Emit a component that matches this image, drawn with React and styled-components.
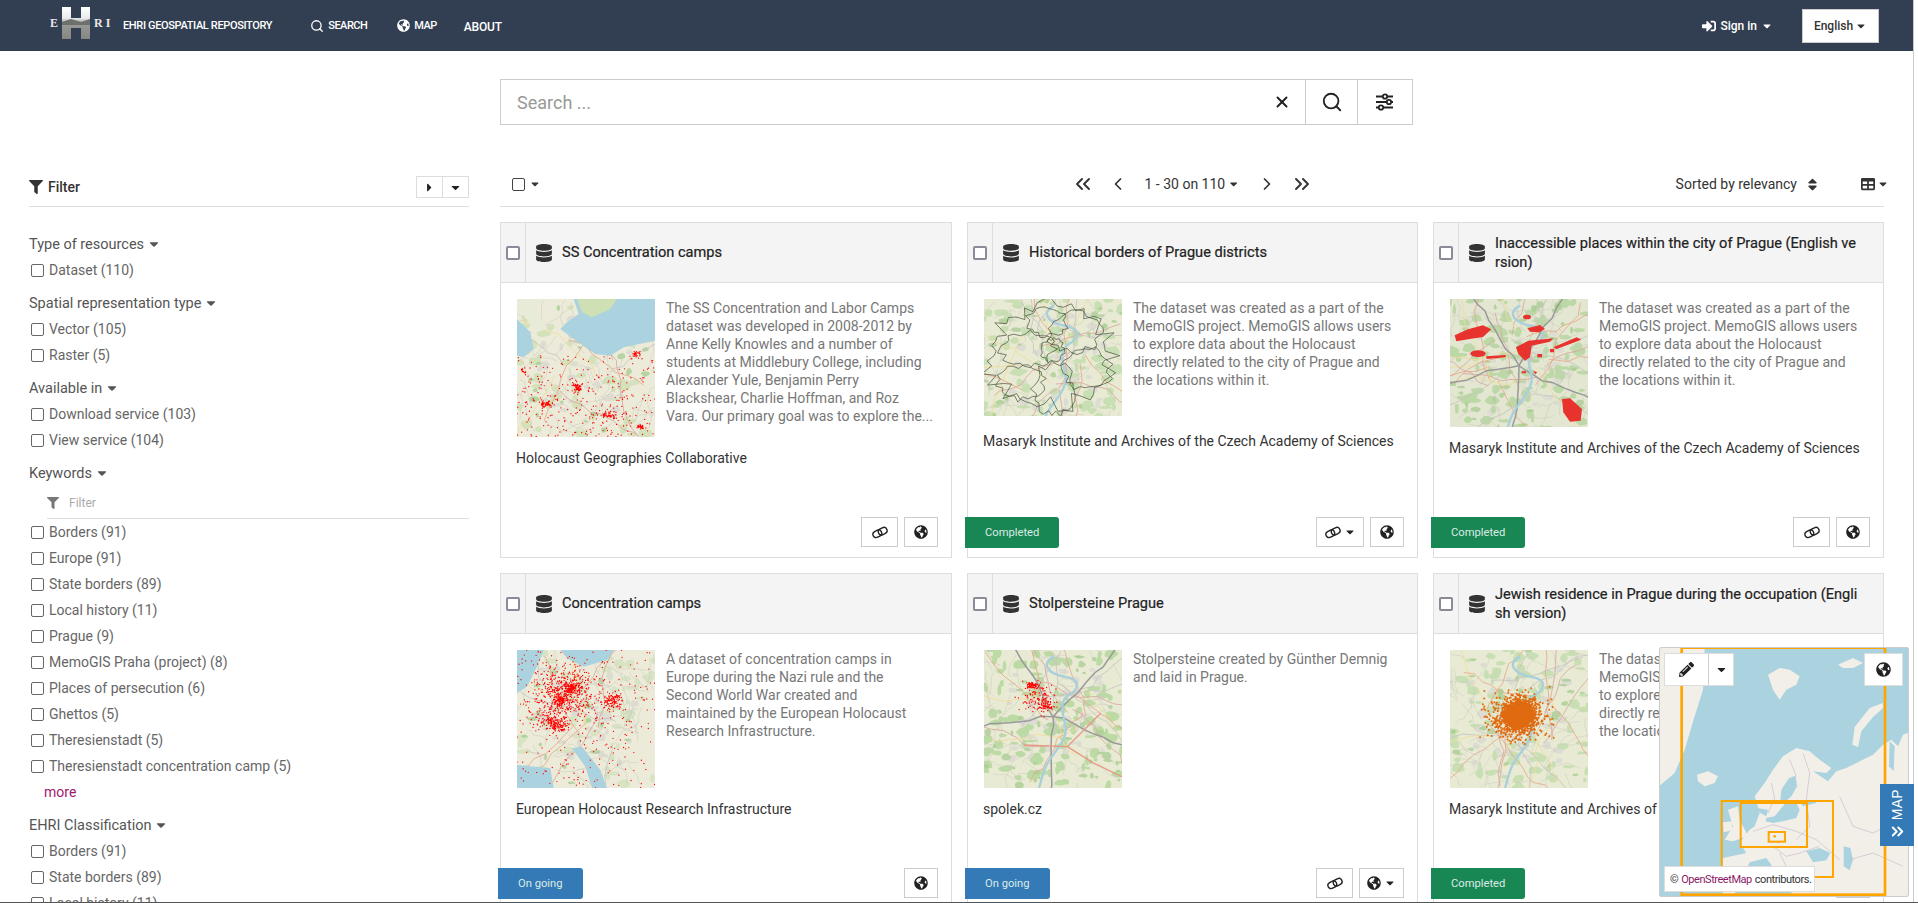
import React from 'react';
import styled, { createGlobalStyle } from 'styled-components';
import { FaCaretDown, FaCaretRight, FaDatabase, FaFilter, FaGlobeAmericas, FaPencilAlt, FaSignInAlt, FaSort, FaTable } from 'react-icons/fa';
import { ChevronLeft, ChevronRight, ChevronsLeft, ChevronsRight, Search, X } from 'lucide-react';

const GlobalStyle = createGlobalStyle`
  html, body {
    margin: 0;
    padding: 0;
    background: #fff;
    font-family: Roboto, "Liberation Sans", sans-serif;
    font-size: 14px;
    color: #333;
  }
`;

const Shell = styled.div`
  position: relative;
  width: 1918px;
  height: 903px;
  overflow: hidden;
  display: flex;
  flex-direction: column;
`;

const Viewport = styled.div`
  flex: 1;
  min-height: 0;
  display: flex;
`;

const BottomEdge = styled.div`
  height: 1px;
  background: #555;
`;

const ScrollRail = styled.div`
  width: 4px;
  border-left: 1px solid #ccc;
  background: #fff;
`;

const Page = styled.div`
  flex: 1;
  min-width: 0;
  overflow: hidden;
`;

const Navbar = styled.nav`
  height: 51px;
  background: #323f52;
  display: flex;
  align-items: center;
  padding: 0 34px 0 50px;
  color: #fff;
`;

const Logo = styled.div`
  display: flex;
  align-items: center;
  font-family: "Liberation Serif", serif;
  font-size: 12px;
  font-weight: 700;
  color: #e8e8e8;
  letter-spacing: 3px;
  width: 73px;
  margin-top: -5px;
`;

const LogoMark = styled.svg`
  width: 28px;
  height: 32px;
  margin: 0 4px 0 1px;
  flex-shrink: 0;
`;

const Brand = styled.span`
  font-size: 11px;
  font-weight: 500;
  letter-spacing: -0.35px;
  white-space: nowrap;
  margin-right: 38px;
`;

const NavLink = styled.span`
  display: inline-flex;
  align-items: center;
  gap: 4px;
  font-size: ${(p) => (p.$big ? 12 : 11)}px;
  font-weight: 500;
  letter-spacing: ${(p) => (p.$big ? -0.2 : -0.5)}px;
  margin-top: ${(p) => (p.$big ? 2 : 0)}px;
  margin-right: ${(p) => p.$gap || 30}px;
  white-space: nowrap;
  svg { flex-shrink: 0; }
`;

const NavRight = styled.div`
  margin-left: auto;
  display: flex;
  align-items: center;
`;

const SignIn = styled.span`
  display: inline-flex;
  align-items: center;
  gap: 4px;
  font-size: 12px;
  font-weight: 500;
  margin-right: 29px;
`;

const LangButton = styled.button`
  width: 77px;
  height: 34px;
  border: 1px solid #ccc;
  background: #fff;
  color: #333;
  font: 500 12px Roboto, sans-serif;
  padding: 0;
  display: inline-flex;
  align-items: center;
  justify-content: center;
  gap: 2px;
`;

const Layout = styled.div`
  display: grid;
  grid-template-columns: 440px 1384px;
  column-gap: 31px;
  padding-left: 29px;
`;

const SearchBar = styled.div`
  grid-column: 2;
  width: 913px;
  height: 46px;
  margin: 28px 0 51px;
  box-sizing: border-box;
  border: 1px solid #ccc;
  display: flex;
  align-items: center;
`;

const SearchInput = styled.input`
  flex: 1;
  min-width: 0;
  border: 0;
  outline: 0;
  height: 100%;
  padding: 0 0 0 16px;
  font: 400 18px Roboto, sans-serif;
  color: #333;
  &::placeholder { color: #999; opacity: 1; }
`;

const ClearButton = styled.span`
  width: 46px;
  display: flex;
  align-items: center;
  justify-content: center;
  color: #222;
`;

const SearchAction = styled.span`
  width: ${(p) => p.$w}px;
  height: 100%;
  box-sizing: border-box;
  border-left: 1px solid #ccc;
  display: flex;
  align-items: center;
  justify-content: center;
  color: #222;
`;

const Sidebar = styled.aside`
  grid-column: 1;
  grid-row: 2;
  min-width: 0;
`;

const FilterHead = styled.div`
  height: 31px;
  box-sizing: border-box;
  padding-bottom: 8px;
  border-bottom: 1px solid #ddd;
  display: flex;
  align-items: center;
  justify-content: space-between;
  margin-bottom: 24px;
`;

const FilterTitle = styled.div`
  display: flex;
  align-items: center;
  gap: 5px;
  font-size: 14px;
  font-weight: 500;
  color: #333;
`;

const ExpandGroup = styled.div`
  display: flex;
  border: 1px solid #ddd;
  height: 22px;
  box-sizing: border-box;
`;

const ExpandCell = styled.span`
  width: 25px;
  display: flex;
  align-items: center;
  justify-content: center;
  color: #222;
  & + & { border-left: 1px solid #ddd; }
`;

const FacetGroup = styled.section`
  margin-bottom: 7px;
`;

const FacetTitle = styled.div`
  height: 26px;
  display: flex;
  align-items: center;
  gap: 3px;
  font-size: 14.5px;
  color: #555;
`;

const FacetRow = styled.div`
  height: 26px;
  display: flex;
  align-items: center;
  gap: 5px;
  padding-left: 2px;
  font-size: 14px;
  color: #666;
  white-space: nowrap;
`;

const FacetBox = styled.span`
  width: 13px;
  height: 13px;
  box-sizing: border-box;
  border: 1.5px solid #666;
  border-radius: 2px;
  flex-shrink: 0;
  margin-top: 1px;
`;

const FacetFilter = styled.div`
  margin-left: 18px;
  height: 31px;
  box-sizing: border-box;
  margin-top: 2px;
  border-bottom: 1px solid #ddd;
  display: flex;
  align-items: center;
  gap: 10px;
  font-size: 12px;
  color: #aaa;
  svg { color: #777; }
`;

const MoreLink = styled.div`
  height: 26px;
  line-height: 26px;
  padding-left: 15px;
  color: #a2186b;
`;

const Content = styled.main`
  grid-column: 2;
  grid-row: 2;
  min-width: 0;
`;

const Toolbar = styled.div`
  height: 31px;
  box-sizing: border-box;
  padding-bottom: 14px;
  border-bottom: 1px solid #ddd;
  display: grid;
  grid-template-columns: 1fr auto 1fr;
  align-items: center;
  margin-bottom: 15px;
`;

const SelectAll = styled.div`
  display: flex;
  align-items: center;
  gap: 4px;
  padding-left: 12px;
`;

const SelectBox = styled.span`
  width: 13px;
  height: 13px;
  box-sizing: border-box;
  border: 1.5px solid #444;
  border-radius: 2px;
`;

const Pager = styled.div`
  display: flex;
  align-items: center;
  gap: 19px;
  color: #333;
`;

const PagerArrow = styled.span`
  width: 16px;
  height: 16px;
  display: flex;
  align-items: center;
  justify-content: center;
  svg { flex-shrink: 0; }
`;

const PagerLabel = styled.span`
  display: inline-flex;
  align-items: center;
  gap: 3px;
  width: 95px;
  white-space: nowrap;
`;

const ToolbarRight = styled.div`
  display: flex;
  align-items: center;
  justify-content: flex-end;
  margin-right: -5px;
  color: #333;
`;

const SortLabel = styled.span`
  display: inline-flex;
  align-items: center;
  gap: 8px;
  margin-right: 41px;
`;

const ViewToggle = styled.span`
  display: inline-flex;
  align-items: center;
  gap: 2px;
`;

const CardGrid = styled.div`
  display: grid;
  grid-template-columns: 452px 451px 451px;
  gap: 15px;
`;

const Card = styled.article`
  position: relative;
  height: 336px;
  box-sizing: border-box;
  border: 1px solid #ddd;
  display: flex;
  flex-direction: column;
`;

const CardHeader = styled.header`
  height: 59px;
  flex-shrink: 0;
  box-sizing: content-box;
  border-bottom: 1px solid #ddd;
  background: #f4f4f4;
  display: flex;
  align-items: center;
`;

const CheckCell = styled.div`
  width: 24px;
  height: 100%;
  border-right: 1px solid #ddd;
  display: flex;
  align-items: center;
  justify-content: center;
  flex-shrink: 0;
`;

const CardBox = styled.span`
  width: 14px;
  height: 14px;
  box-sizing: border-box;
  border: 2px solid #8a8a98;
  border-radius: 2px;
  background: #fff;
`;

const TypeIcon = styled.span`
  width: 16px;
  margin: 0 10px 0 10px;
  display: flex;
  color: #333;
  flex-shrink: 0;
`;

const CardTitle = styled.h3`
  margin: 0;
  width: 365px;
  font-size: 14.6px;
  line-height: 19px;
  font-weight: 400;
  color: #222;
  -webkit-text-stroke: 0.2px #222;
  word-break: break-all;
`;

const CardBody = styled.div`
  padding: 16px 16px 0;
  flex: 1;
  min-height: 0;
`;

const Preview = styled.div`
  display: flex;
  align-items: flex-start;
  gap: 11px;
`;

const Thumb = styled.svg`
  width: 138px;
  flex-shrink: 0;
  display: block;
`;

const Description = styled.p`
  margin: 0;
  font-size: 14px;
  line-height: 18px;
  color: #777;
  width: 263.5px;
`;

const TruncatedLine = styled.span`
  white-space: nowrap;
`;

const Publisher = styled.div`
  margin: ${(p) => p.$top || 12}px 0 0 -1px;
  line-height: 18px;
  font-size: 14px;
  color: #333;
  white-space: nowrap;
`;

const CardFooter = styled.footer`
  display: flex;
  justify-content: flex-end;
  gap: 6px;
  padding: 0 13px 10px;
`;

const IconButton = styled.span`
  width: ${(p) => p.$w || 34}px;
  height: 30px;
  box-sizing: border-box;
  border: 1px solid #ccc;
  background: #fff;
  display: inline-flex;
  align-items: center;
  justify-content: center;
  gap: 3px;
  color: #222;
`;

const StatusBadge = styled.span`
  position: absolute;
  left: -3px;
  bottom: 9px;
  height: 31px;
  padding: 0 20px;
  display: flex;
  align-items: center;
  font-size: 11.2px;
  color: #dcebe4;
  border-radius: 0 3px 3px 0;
  background: ${(p) => (p.$status === 'Completed' ? '#198754' : '#337ab7')};
`;

const MiniMap = styled.div`
  position: absolute;
  right: 9px;
  bottom: 6px;
  width: 250px;
  height: 250px;
  box-sizing: border-box;
`;

const MiniMapCanvas = styled.svg`
  display: block;
  width: 250px;
  height: 250px;
  border-radius: 3px;
  outline: 1px solid #ccc;
  outline-offset: -1px;
`;

const MapControl = styled.div`
  position: absolute;
  top: 6px;
  ${(p) => (p.$right ? 'right: 6px;' : 'left: 5px;')}
  height: 33px;
  display: flex;
  background: #fff;
  box-sizing: border-box;
  border: 1px solid #ddd;
`;

const MapControlCell = styled.span`
  width: ${(p) => p.$w}px;
  display: flex;
  align-items: center;
  justify-content: center;
  color: #222;
  & + & { border-left: 1px solid #ccc; }
`;

const Attribution = styled.div`
  position: absolute;
  left: 5px;
  bottom: 5px;
  width: 151px;
  height: 26px;
  box-sizing: border-box;
  background: #fff;
  border: 1px solid #ddd;
  display: flex;
  align-items: center;
  padding-left: 5px;
  font-size: 11px;
  letter-spacing: -0.45px;
  color: #333;
  white-space: nowrap;
  a { color: #8a1a66; text-decoration: none; margin: 0 3px; }
`;

const MapTab = styled.div`
  position: absolute;
  right: -5px;
  top: 137px;
  width: 34px;
  height: 62px;
  background: #337ab7;
  color: #fff;
  display: flex;
  flex-direction: column;
  align-items: center;
  justify-content: center;
  gap: 1px;
`;

const MapTabLabel = styled.span`
  writing-mode: vertical-rl;
  transform: rotate(180deg);
  font-family: "Liberation Sans", sans-serif;
  font-size: 14px;
  letter-spacing: 0.3px;
`;

// small seeded generator so the thumbnails look the same on each run
const makeRng = (seed) => {
  let a = seed;
  return () => {
    a = (a + 0x6d2b79f5) | 0;
    let t = Math.imul(a ^ (a >>> 15), 1 | a);
    t = (t + Math.imul(t ^ (t >>> 7), 61 | t)) ^ t;
    return ((t ^ (t >>> 14)) >>> 0) / 4294967296;
  };
};

const blob = (r, cx, cy, rx, ry, n = 10, jitter = 0.4) => {
  const pts = [];
  for (let i = 0; i < n; i++) {
    const ang = (i / n) * Math.PI * 2;
    const k = 1 - jitter / 2 + r() * jitter;
    pts.push(`${(cx + Math.cos(ang) * rx * k).toFixed(1)} ${(cy + Math.sin(ang) * ry * k).toFixed(1)}`);
  }
  return `M${pts.join('L')}Z`;
};

const wander = (r, x, y, steps, dx, dy, spread) => {
  let d = `M${x.toFixed(1)} ${y.toFixed(1)}`;
  let cx = x;
  let cy = y;
  for (let i = 0; i < steps; i++) {
    cx += dx + (r() - 0.5) * spread;
    cy += dy + (r() - 0.5) * spread;
    d += `L${cx.toFixed(1)} ${cy.toFixed(1)}`;
  }
  return d;
};

// clusters: [cx, cy, sx, sy, n, uniform?]
const scatter = (r, clusters) => {
  let d = '';
  clusters.forEach(([cx, cy, sx, sy, n, uniform]) => {
    for (let i = 0; i < n; i++) {
      const g1 = uniform ? r() * 2 - 1 : (r() + r() + r() - 1.5) / 1.5;
      const g2 = uniform ? r() * 2 - 1 : (r() + r() + r() - 1.5) / 1.5;
      d += `M${(cx + g1 * sx).toFixed(1)} ${(cy + g2 * sy).toFixed(1)}h.01`;
    }
  });
  return d;
};

const Terrain = ({ seed, bg = '#e8ead4', green = 90, greenColor = '#c8dfb4', roads = 16, heavy = 0 }) => {
  const r = makeRng(seed);
  const patches = [];
  for (let i = 0; i < green; i++) {
    patches.push(blob(r, r() * 414, r() * 414, 5 + r() * 17, 4 + r() * 12));
  }
  const forests = [];
  for (let i = 0; i < green / 3; i++) {
    forests.push(blob(r, r() * 414, r() * 414, 4 + r() * 11, 3 + r() * 8));
  }
  const grey = [];
  for (let i = 0; i < 40; i++) {
    grey.push(blob(r, 207 + (r() - 0.5) * 300, 190 + (r() - 0.5) * 300, 5 + r() * 12, 4 + r() * 10));
  }
  const minor = [];
  for (let i = 0; i < 70; i++) {
    const ang = r() * Math.PI * 2;
    minor.push(wander(r, r() * 414, r() * 414, 5, Math.cos(ang) * 16, Math.sin(ang) * 16, 18));
  }
  const lines = [];
  for (let i = 0; i < roads; i++) {
    const ang = r() * Math.PI * 2;
    lines.push({
      d: wander(r, 207 + (r() - 0.5) * 200, 190 + (r() - 0.5) * 200, 9, Math.cos(ang) * 30, Math.sin(ang) * 30, 26),
      c: ['#e8a98c', '#c7c5c0', '#f1dc9a', '#d9a9a0'][i % 4],
    });
  }
  const main = [];
  for (let i = 0; i < heavy; i++) {
    const ang = (i / heavy) * Math.PI * 2 + 0.4;
    main.push(wander(r, 207, 200, 9, Math.cos(ang) * 32, Math.sin(ang) * 32, 18));
  }
  return (
    <>
      <rect width="414" height="414" fill={bg} />
      <path d={grey.join('')} fill="#dcdcd2" />
      <path d={patches.join('')} fill={greenColor} />
      <path d={forests.join('')} fill="#a9cd92" opacity="0.8" />
      <path d={minor.join('')} fill="none" stroke="#c9c9bd" strokeWidth="1.4" />
      {lines.map((l, i) => (
        <path key={i} d={l.d} fill="none" stroke={l.c} strokeWidth="2.6" />
      ))}
      {main.map((d, i) => (
        <path key={i} d={d} fill="none" stroke="#9a9a9a" strokeWidth="4.5" />
      ))}
    </>
  );
};

const River = () => (
  <path d="M210 20C170 40 190 70 240 80C300 90 280 120 255 135C225 150 235 190 245 230C250 270 215 300 190 340C175 370 170 400 165 414" fill="none" stroke="#a9cfdc" strokeWidth="7" />
);

const Dots = ({ d, color = '#f00', size = 4 }) => (
  <path d={d} fill="none" stroke={color} strokeWidth={size} strokeLinecap="round" />
);

const districtLines = () => {
  const r = makeRng(44);
  const shapes = [blob(r, 200, 170, 185, 150, 60, 0.36)];
  [[130, 150, 80, 50], [270, 100, 80, 60], [110, 250, 70, 50], [210, 270, 60, 80], [310, 210, 70, 60], [205, 155, 35, 35], [190, 70, 60, 40]].forEach(([x, y, a, b]) => {
    shapes.push(blob(r, x, y, a, b, 30, 0.38));
  });
  return shapes.join('');
};

const camps1 = scatter(makeRng(7), [[207, 292, 207, 122, 300, true], [180, 265, 22, 20, 60], [90, 315, 32, 16, 50], [275, 350, 45, 18, 50], [360, 165, 18, 12, 26], [370, 385, 18, 10, 30], [20, 215, 16, 16, 14]]);
const camps2 = scatter(makeRng(12), [[207, 207, 207, 207, 300, true], [150, 130, 130, 110, 500], [165, 115, 30, 22, 120], [130, 150, 28, 20, 80], [290, 150, 50, 40, 120], [90, 210, 60, 40, 100], [125, 225, 40, 30, 110]]);
const stones = scatter(makeRng(21), [[160, 145, 75, 70, 120], [145, 105, 28, 14, 70], [190, 165, 42, 28, 60]]);
const residents = scatter(makeRng(33), [[200, 205, 135, 105, 450], [205, 195, 80, 70, 800]]);

const scenes = {
  germany: (
    <>
      <Terrain seed={3} green={60} bg="#ecebd9" greenColor="#d3e2bb" roads={10} />
      <path d="M170 0L185 45L150 70L130 90L170 120L205 145L235 165L280 170L320 145L414 125V0Z" fill="#aad3df" />
      <path d="M0 60L40 100L50 150L20 175L0 170Z" fill="#aad3df" />
      <path d="M180 0H300L280 30L225 55L195 40Z" fill="#cfe0b4" />
      <path d="M0 0H70L60 40L90 90L60 100L20 50L0 40Z" fill="#e9ebd9" />
      <Dots d={camps1} />
    </>
  ),
  districts: (
    <>
      <Terrain seed={14} green={110} roads={20} />
      <River />
      <path d={districtLines()} fill="none" stroke="#3d4a33" strokeWidth="2" />
    </>
  ),
  places: (
    <>
      <Terrain seed={27} green={110} roads={26} bg="#e3e6d0" greenColor="#bcd8a6" heavy={5} />
      <River />
      <g fill="#e8322d">
        <path d="M14 109L54 91L99 79L124 91L99 114L64 119L19 127Z" />
        <ellipse cx="84" cy="164" rx="23" ry="10" />
        <path d="M108 172L167 168L167 175L110 180Z" />
        <ellipse cx="231" cy="54" rx="12" ry="7" />
        <path d="M232 88L270 78L285 90L268 100L240 98Z" />
        <path d="M198 145L235 125L310 118L300 128L245 140L240 175L225 185L205 165Z" />
        <path d="M310 145L380 115L394 122L360 135L320 150Z" />
        <path d="M336 300L360 298L396 330L392 365L360 368L340 340Z" />
        <path d="M262 165H276V175H262ZM300 150H312V160H300ZM215 217H228V223H215ZM250 215L262 220L255 226Z" />
      </g>
    </>
  ),
  europe: (
    <>
      <Terrain seed={5} green={60} bg="#ecebd9" greenColor="#d7e3c2" roads={12} />
      <path d="M0 0H80L60 50L30 110L0 130Z" fill="#aad3df" />
      <path d="M130 0H290L270 30L200 50L150 25Z" fill="#aad3df" />
      <path d="M165 295L195 290L250 360L270 414H225L205 350Z" fill="#aad3df" />
      <path d="M0 345L55 350L100 355L110 414H0Z" fill="#aad3df" />
      <Dots d={camps2} />
    </>
  ),
  stones: (
    <>
      <Terrain seed={38} green={110} roads={18} greenColor="#bcdaa4" heavy={5} />
      <River />
      <path d="M120 285L250 290L300 240L350 190M250 290L330 340L414 380" fill="none" stroke="#e69a86" strokeWidth="4" />
      <Dots d={stones} />
    </>
  ),
  residents: (
    <>
      <Terrain seed={51} green={90} roads={22} />
      <River />
      <path d={blob(makeRng(2), 205, 195, 48, 40, 16, 0.4)} fill="#d9660f" />
      <Dots d={residents} color="#e06a10" size={6} />
    </>
  ),
};

const MiniMapDrawing = () => (
  <MiniMapCanvas viewBox="58 22 750 750">
    <rect x="58" y="22" width="750" height="750" fill="#aad3df" />
    <g fill="#f2efe9">
      <path d="M58 22H195L190 150L165 230L135 330L105 400L58 440Z" />
      <path d="M385 105L420 85L450 90L480 110L470 135L440 150L420 180L400 150Z" />
      <path d="M595 75L640 55L670 70L640 85L610 85Z" />
      <path d="M730 190L690 205L645 262L638 315L655 322L665 275L700 232L730 205Z" />
      <path d="M172 405L205 395L235 410L225 430L195 440L175 425Z" />
      <path d="M345 470L375 430L400 390L430 350L470 325L510 335L540 360L575 385L560 400L520 395L565 425L590 395L620 385L660 365L700 345L730 315L755 300L775 320L790 285L808 278V772H250V655L320 640L300 610L330 570L345 560L360 520Z" />
      <path d="M265 510L295 500L300 540L325 590L280 605L255 600L280 560Z" />
      <path d="M250 548L278 545L278 572L252 578Z" />
    </g>
    <g fill="#aad3df">
      <path d="M468 408L448 415L425 450L422 480L440 483L455 470L472 440Z" />
      <path d="M380 535L405 530L425 505L440 488L470 490L480 510L470 535L430 545L400 550L378 545Z" />
      <path d="M480 488L530 480L530 490L490 500Z" />
      <path d="M350 505L385 510L380 530L362 520Z" />
      <path d="M330 668L380 655L405 690L440 710L460 772H280Z" />
      <path d="M500 635L540 625L572 640L560 662L520 668Z" />
      <path d="M612 620L632 625L640 660L630 692L612 680Z" />
      <path d="M750 305L765 320L762 395L748 380Z" />
    </g>
    <path d="M395 430L405 475L385 520M450 360L470 410M490 340L510 400L500 480L510 560L470 600M340 575L400 555L470 575L530 600L600 660M400 620L440 650L480 640L540 620M600 470L640 560L700 580L780 540M630 660L700 640L790 680M420 640L450 700L520 720" fill="none" stroke="#cbb9cb" strokeWidth="2" />
    <g fill="none" stroke="#ffa500">
      <rect x="126" y="24" width="610" height="741" strokeWidth="8" />
      <rect x="246" y="484" width="334" height="228" strokeWidth="6" />
      <rect x="303" y="490" width="199" height="132" strokeWidth="6" />
      <rect x="387" y="577" width="49" height="29" strokeWidth="6" />
    </g>
    <circle cx="405" cy="590" r="4" fill="#ffa500" />
    <circle cx="417" cy="608" r="3" fill="#ffa500" />
  </MiniMapCanvas>
);

const LogoH = () => (
  <LogoMark viewBox="0 0 28 32">
    <defs>
      <clipPath id="logo-h">
        <path d="M0 0H9V11H19V0H28V32H19V21H9V32H0Z" />
      </clipPath>
      <linearGradient id="logo-fade" x1="0" y1="0" x2="0" y2="1">
        <stop offset="0" stopColor="#fff" />
        <stop offset="0.35" stopColor="#e8eaec" />
        <stop offset="0.5" stopColor="#9a9c98" />
        <stop offset="1" stopColor="#858582" />
      </linearGradient>
    </defs>
    <g clipPath="url(#logo-h)">
      <rect width="28" height="32" fill="url(#logo-fade)" />
      <path d="M0 15L9 12L19 15L28 12V18H0Z" fill="#6e706c" />
    </g>
  </LogoMark>
);

const LinkIcon = () => (
  <svg width="16" height="13" viewBox="0 0 16 13" fill="none" stroke="#222" strokeWidth="1.4">
    <rect x="0.8" y="4.6" width="9" height="6.4" rx="3.2" transform="rotate(-28 5.3 7.8)" />
    <rect x="6.2" y="2" width="9" height="6.4" rx="3.2" transform="rotate(-28 10.7 5.2)" />
  </svg>
);

const SlidersIcon = () => (
  <svg width="20" height="20" viewBox="0 0 20 20" fill="none" stroke="#222" strokeWidth="1.8">
    <path d="M1 4.5H18M1 10H18M1 15.5H18" />
    <circle cx="10" cy="4.5" r="2.2" fill="#fff" />
    <circle cx="14" cy="10" r="2.2" fill="#fff" />
    <circle cx="6" cy="15.5" r="2.2" fill="#fff" />
  </svg>
);

const facets = [
  { title: 'Type of resources', items: ['Dataset (110)'] },
  { title: 'Spatial representation type', items: ['Vector (105)', 'Raster (5)'] },
  { title: 'Available in', items: ['Download service (103)', 'View service (104)'] },
  {
    title: 'Keywords',
    search: true,
    more: true,
    items: ['Borders (91)', 'Europe (91)', 'State borders (89)', 'Local history (11)', 'Prague (9)', 'MemoGIS Praha (project) (8)', 'Places of persecution (6)', 'Ghettos (5)', 'Theresienstadt (5)', 'Theresienstadt concentration camp (5)'],
  },
  { title: 'EHRI Classification', items: ['Borders (91)', 'State borders (89)', 'Local history (11)'] },
];

const memoGis = 'The dataset was created as a part of the MemoGIS project. MemoGIS allows users to explore data about the Holocaust directly related to the city of Prague and the locations within it.';
const masaryk = 'Masaryk Institute and Archives of the Czech Academy of Sciences';

const records = [
  {
    title: 'SS Concentration camps',
    scene: 'germany',
    height: 138,
    text: 'The SS Concentration and Labor Camps dataset was developed in 2008-2012 by Anne Kelly Knowles and a number of students at Middlebury College, including Alexander Yule, Benjamin Perry Blackshear, Charlie Hoffman, and Roz ',
    tail: 'Vara. Our primary goal was to explore the...',
    publisher: 'Holocaust Geographies Collaborative',
    actions: [{ icon: 'link', w: 37 }, { icon: 'globe', w: 34 }],
  },
  {
    title: 'Historical borders of Prague districts',
    scene: 'districts',
    height: 117,
    text: memoGis,
    publisher: masaryk,
    pubTop: 16,
    status: 'Completed',
    actions: [{ icon: 'link', w: 48, caret: true }, { icon: 'globe', w: 34 }],
  },
  {
    title: 'Inaccessible places within the city of Prague (English version)',
    scene: 'places',
    height: 128,
    text: memoGis,
    publisher: masaryk,
    status: 'Completed',
    actions: [{ icon: 'link', w: 37 }, { icon: 'globe', w: 34 }],
  },
  {
    title: 'Concentration camps',
    scene: 'europe',
    height: 138,
    text: 'A dataset of concentration camps in Europe during the Nazi rule and the Second World War created and maintained by the European Holocaust Research Infrastructure.',
    publisher: 'European Holocaust Research Infrastructure',
    status: 'On going',
    actions: [{ icon: 'globe', w: 34 }],
  },
  {
    title: 'Stolpersteine Prague',
    scene: 'stones',
    height: 138,
    text: 'Stolpersteine created by Günther Demnig and laid in Prague.',
    publisher: 'spolek.cz',
    status: 'On going',
    actions: [{ icon: 'link', w: 37 }, { icon: 'globe', w: 45, caret: true }],
  },
  {
    title: 'Jewish residence in Prague during the occupation (English version)',
    scene: 'residents',
    height: 138,
    text: memoGis,
    publisher: masaryk,
    status: 'Completed',
    actions: [{ icon: 'globe', w: 34 }],
  },
];

const RecordCard = ({ record }) => (
  <Card>
    <CardHeader>
      <CheckCell><CardBox /></CheckCell>
      <TypeIcon><FaDatabase size={18} /></TypeIcon>
      <CardTitle>{record.title}</CardTitle>
    </CardHeader>
    <CardBody>
      <Preview>
        <Thumb viewBox={`0 0 414 ${record.height * 3}`} height={record.height}>
          {scenes[record.scene]}
        </Thumb>
        <Description>
          {record.text}
          {record.tail && <TruncatedLine>{record.tail}</TruncatedLine>}
        </Description>
      </Preview>
      <Publisher $top={record.pubTop}>{record.publisher}</Publisher>
    </CardBody>
    <CardFooter>
      {record.actions.map((a, i) => (
        <IconButton key={i} $w={a.w}>
          {a.icon === 'link' ? <LinkIcon /> : <FaGlobeAmericas size={14} />}
          {a.caret && <FaCaretDown size={12} />}
        </IconButton>
      ))}
    </CardFooter>
    {record.status && <StatusBadge $status={record.status}>{record.status}</StatusBadge>}
  </Card>
);

export default function App() {
  return (
    <Shell>
      <GlobalStyle />
      <Viewport>
        <Page>
          <Navbar>
            <Logo>E<LogoH />RI</Logo>
            <Brand>EHRI GEOSPATIAL REPOSITORY</Brand>
            <NavLink $gap={30}><Search size={14} strokeWidth={2.2} />SEARCH</NavLink>
            <NavLink $gap={27}><FaGlobeAmericas size={13} />MAP</NavLink>
            <NavLink $big>ABOUT</NavLink>
            <NavRight>
              <SignIn><FaSignInAlt size={14} />Sign in<FaCaretDown size={12} /></SignIn>
              <LangButton>English<FaCaretDown size={12} /></LangButton>
            </NavRight>
          </Navbar>
          <Layout>
            <SearchBar>
              <SearchInput placeholder="Search ..." readOnly />
              <ClearButton><X size={18} strokeWidth={2.6} /></ClearButton>
              <SearchAction $w={52}><Search size={22} strokeWidth={2} /></SearchAction>
              <SearchAction $w={55}><SlidersIcon /></SearchAction>
            </SearchBar>
            <Sidebar>
              <FilterHead>
                <FilterTitle><FaFilter size={14} />Filter</FilterTitle>
                <ExpandGroup>
                  <ExpandCell><FaCaretRight size={13} /></ExpandCell>
                  <ExpandCell><FaCaretDown size={13} /></ExpandCell>
                </ExpandGroup>
              </FilterHead>
              {facets.map((f) => (
                <FacetGroup key={f.title}>
                  <FacetTitle>{f.title}<FaCaretDown size={14} /></FacetTitle>
                  {f.search && <FacetFilter><FaFilter size={12} />Filter</FacetFilter>}
                  {f.items.map((item) => (
                    <FacetRow key={item}><FacetBox />{item}</FacetRow>
                  ))}
                  {f.more && <MoreLink>more</MoreLink>}
                </FacetGroup>
              ))}
            </Sidebar>
            <Content>
              <Toolbar>
                <SelectAll><SelectBox /><FaCaretDown size={12} /></SelectAll>
                <Pager>
                  <PagerArrow><ChevronsLeft size={24} strokeWidth={1.9} /></PagerArrow>
                  <PagerArrow><ChevronLeft size={20} strokeWidth={2.1} /></PagerArrow>
                  <PagerLabel>1 - 30 on 110<FaCaretDown size={12} /></PagerLabel>
                  <PagerArrow><ChevronRight size={20} strokeWidth={2.1} /></PagerArrow>
                  <PagerArrow><ChevronsRight size={24} strokeWidth={1.9} /></PagerArrow>
                </Pager>
                <ToolbarRight>
                  <SortLabel>Sorted by relevancy<FaSort size={15} /></SortLabel>
                  <ViewToggle><FaTable size={14} /><FaCaretDown size={12} /></ViewToggle>
                </ToolbarRight>
              </Toolbar>
              <CardGrid>
                {records.map((r) => (
                  <RecordCard key={r.title} record={r} />
                ))}
              </CardGrid>
            </Content>
          </Layout>
        </Page>
        <ScrollRail />
      </Viewport>
      <BottomEdge />
      <MiniMap>
        <MiniMapDrawing />
        <MapControl>
          <MapControlCell $w={43}><FaPencilAlt size={15} /></MapControlCell>
          <MapControlCell $w={24}><FaCaretDown size={13} /></MapControlCell>
        </MapControl>
        <MapControl $right>
          <MapControlCell $w={37}><FaGlobeAmericas size={15} /></MapControlCell>
        </MapControl>
        <Attribution>©<a>OpenStreetMap</a>contributors.</Attribution>
        <MapTab>
          <MapTabLabel>MAP</MapTabLabel>
          <ChevronsRight size={19} strokeWidth={2.4} />
        </MapTab>
      </MiniMap>
    </Shell>
  );
}
